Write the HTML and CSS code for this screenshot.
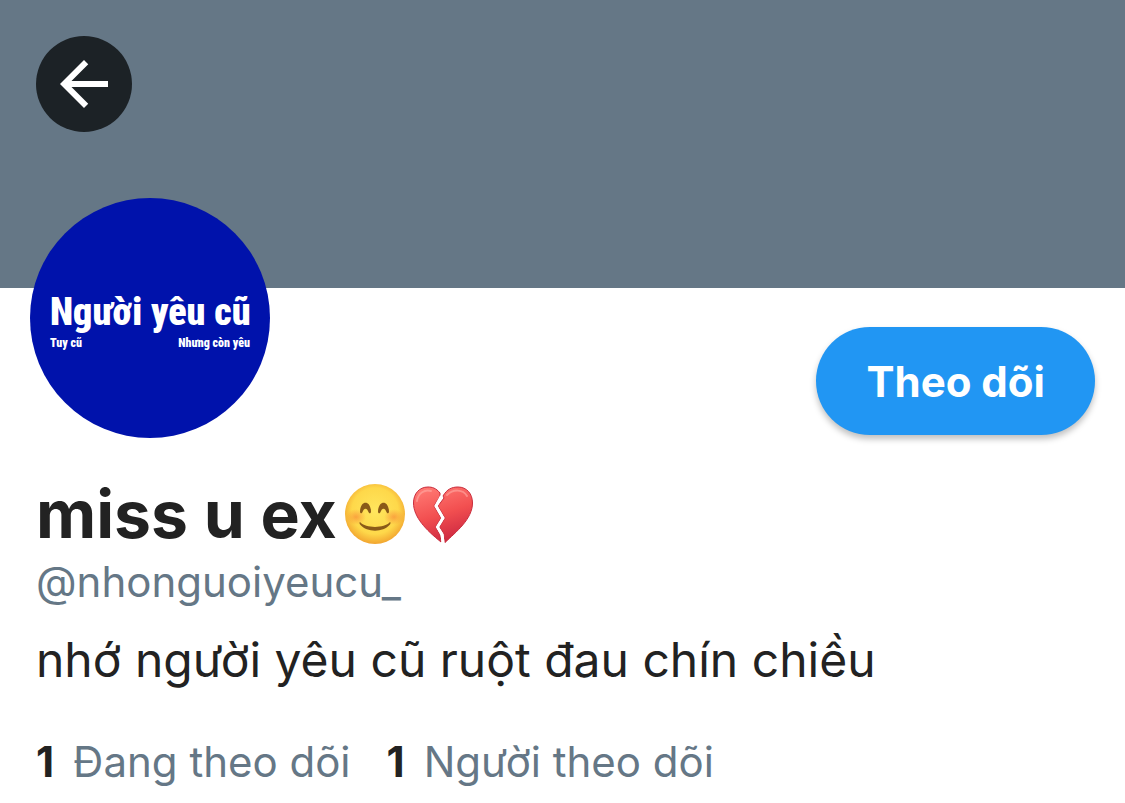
FILE: index.html
```html
<!DOCTYPE html>
<html lang="vi">

<head>
    <meta charset="UTF-8" />
    <meta name="viewport" content="width=device-width, initial-scale=1.0" />
    <title>miss u ex (@nhonguoiyeucu_)</title>
    <link rel="stylesheet" href="styles.css">
</head>

<body>
    <header class="cover">
        <button class="back" type="button" aria-label="Quay lại">
            <svg viewBox="-4 -4 32 32" aria-hidden="true">
                <path d="M20 11H7.830l5.590-5.590L12 4l-8 8 8 8 1.410-1.410L7.830 13H20v-2z" />
            </svg>
        </button>
    </header>

    <main class="profile">
        <div class="top-row">
            <div class="avatar">
                <span class="avatar-title">Người yêu cũ</span>
                <div class="avatar-sub"><span>Tuy cũ</span><span>Nhưng còn yêu</span></div>
            </div>
            <button class="follow" type="button">Theo dõi</button>
        </div>

        <div class="info">
            <h1 class="name">
                <span>miss u ex</span>
                <svg class="emoji" viewBox="0 0 60 60" role="img" aria-label="mặt cười">
                    <defs>
                        <radialGradient id="face" cx="50%" cy="45%" r="55%">
                            <stop offset="0" stop-color="#ffe65e" />
                            <stop offset="0.7" stop-color="#fed84a" />
                            <stop offset="1" stop-color="#f2a530" />
                        </radialGradient>
                        <radialGradient id="blush">
                            <stop offset="0" stop-color="#f77f35" stop-opacity="0.6" />
                            <stop offset="1" stop-color="#f77f35" stop-opacity="0" />
                        </radialGradient>
                    </defs>
                    <circle cx="30" cy="30" r="30" fill="url(#face)" />
                    <ellipse cx="11" cy="33" rx="10" ry="8" fill="url(#blush)" />
                    <ellipse cx="49" cy="33" rx="10" ry="8" fill="url(#blush)" />
                    <g fill="#8a5a18">
                        <path d="M15 28C15 15.500 26 15.500 26 28C25.500 30 24 29.500 23.500 28C22 23.500 19 23.500 17.500 28C17 29.500 15.500 30 15 28Z" />
                        <path d="M33 28C33 15.500 44 15.500 44 28C43.500 30 42 29.500 41.500 28C40 23.500 37 23.500 35.500 28C35 29.500 33.500 30 33 28Z" />
                        <path d="M15 38C21 44.500 39 44.500 45 38C46 38.500 45.500 40 44.500 41C38 48.500 22 48.500 15.500 41C14.500 40 14 38.500 15 38Z" />
                    </g>
                </svg>
                <svg class="emoji" viewBox="0 0 60 60" role="img" aria-label="trái tim tan vỡ">
                    <defs>
                        <linearGradient id="heart" gradientUnits="userSpaceOnUse" x1="20" y1="2" x2="38" y2="58">
                            <stop offset="0" stop-color="#ff7872" />
                            <stop offset="0.5" stop-color="#f24f50" />
                            <stop offset="1" stop-color="#cb2640" />
                        </linearGradient>
                    </defs>
                    <g fill="url(#heart)" stroke="#c92c3c" stroke-width="1" stroke-linejoin="round">
                        <path d="M27 9C23 4 19 3 15 3C6 3 .5 10 .5 19C.5 33 13 46 28 58L27 51L22.500 43L28 34L21 22L27 12Z" />
                        <path d="M30 12C34 5 39 3 45 3C54 3 59.500 10 59.500 19C59.500 35 43 48 32 58.500L31 50L26.500 43L32 34L25 22L31 14Z" />
                    </g>
                    <path d="M28.500 12L23 22L30 34L24.500 43L29 50.500L30 58" fill="none" stroke="#fff" stroke-width="3" />
                    <path d="M4 17C5 9 12 5 18 7M34 11C40 5 50 5 54 12" fill="none" stroke="#ffaaa4" stroke-width="2" stroke-linecap="round" opacity="0.6" />
                </svg>
            </h1>
            <p class="handle">@nhonguoiyeucu_</p>
            <p class="bio">nhớ người yêu cũ ruột đau chín chiều</p>
            <div class="stats">
                <a href="#following"><strong>1</strong><span>Đang theo dõi</span></a>
                <a href="#followers"><strong>1</strong><span>Người theo dõi</span></a>
            </div>
        </div>
    </main>
</body>

</html>
```
FILE: styles.css
```css
* {
    box-sizing: border-box;
}

body {
    margin: 0;
    font-family: Inter, "Noto Sans", sans-serif;
    background: #fff;
    color: #222;
}

button {
    border: none;
    padding: 0;
    font-family: inherit;
    cursor: pointer;
}

.cover {
    min-height: 288px;
    padding: 36px;
    background: #657786;
}

.back {
    display: block;
    width: 96px;
    height: 96px;
    border-radius: 50%;
    background: #1c2226;
}

.back svg {
    display: block;
    width: 100%;
    fill: #fff;
}

.top-row {
    display: flex;
    justify-content: space-between;
    align-items: flex-start;
    padding: 0 30px;
}

.avatar {
    display: flex;
    flex-direction: column;
    justify-content: center;
    width: 240px;
    height: 240px;
    margin-top: -90px;
    padding: 8px 20px 0;
    border-radius: 50%;
    background: #0012ab;
    color: #fff;
    font-family: "Roboto Condensed", Roboto, sans-serif;
    font-weight: 900;
    white-space: nowrap;
}

.avatar-title {
    font-size: 38px;
    line-height: 42px;
}

.avatar-sub {
    display: flex;
    justify-content: space-between;
    font-size: 12px;
    line-height: 20px;
}

.follow {
    min-height: 108px;
    margin-top: 39px;
    padding: 0 50px;
    border-radius: 54px;
    background: #2196f3;
    color: #fff;
    font-size: 42px;
    font-weight: 700;
    box-shadow: 0 4px 6px rgba(0, 0, 0, 0.25);
}

.info {
    padding: 40px 36px 12px;
}

.name {
    display: flex;
    align-items: center;
    gap: 8px;
    margin: 0;
    font-size: 66px;
    line-height: 72px;
}

.emoji {
    width: 60px;
    height: 60px;
}

.handle,
.stats {
    font-size: 42px;
    line-height: 60px;
    color: #657786;
}

.handle {
    margin: 2px 0 12px;
}

.bio {
    margin: 0 0 36px;
    font-size: 48px;
    line-height: 72px;
}

.stats {
    display: flex;
    flex-wrap: wrap;
    gap: 0 36px;
}

.stats a {
    display: flex;
    gap: 19px;
    color: inherit;
    text-decoration: none;
}

.stats strong {
    color: #222;
}
```
